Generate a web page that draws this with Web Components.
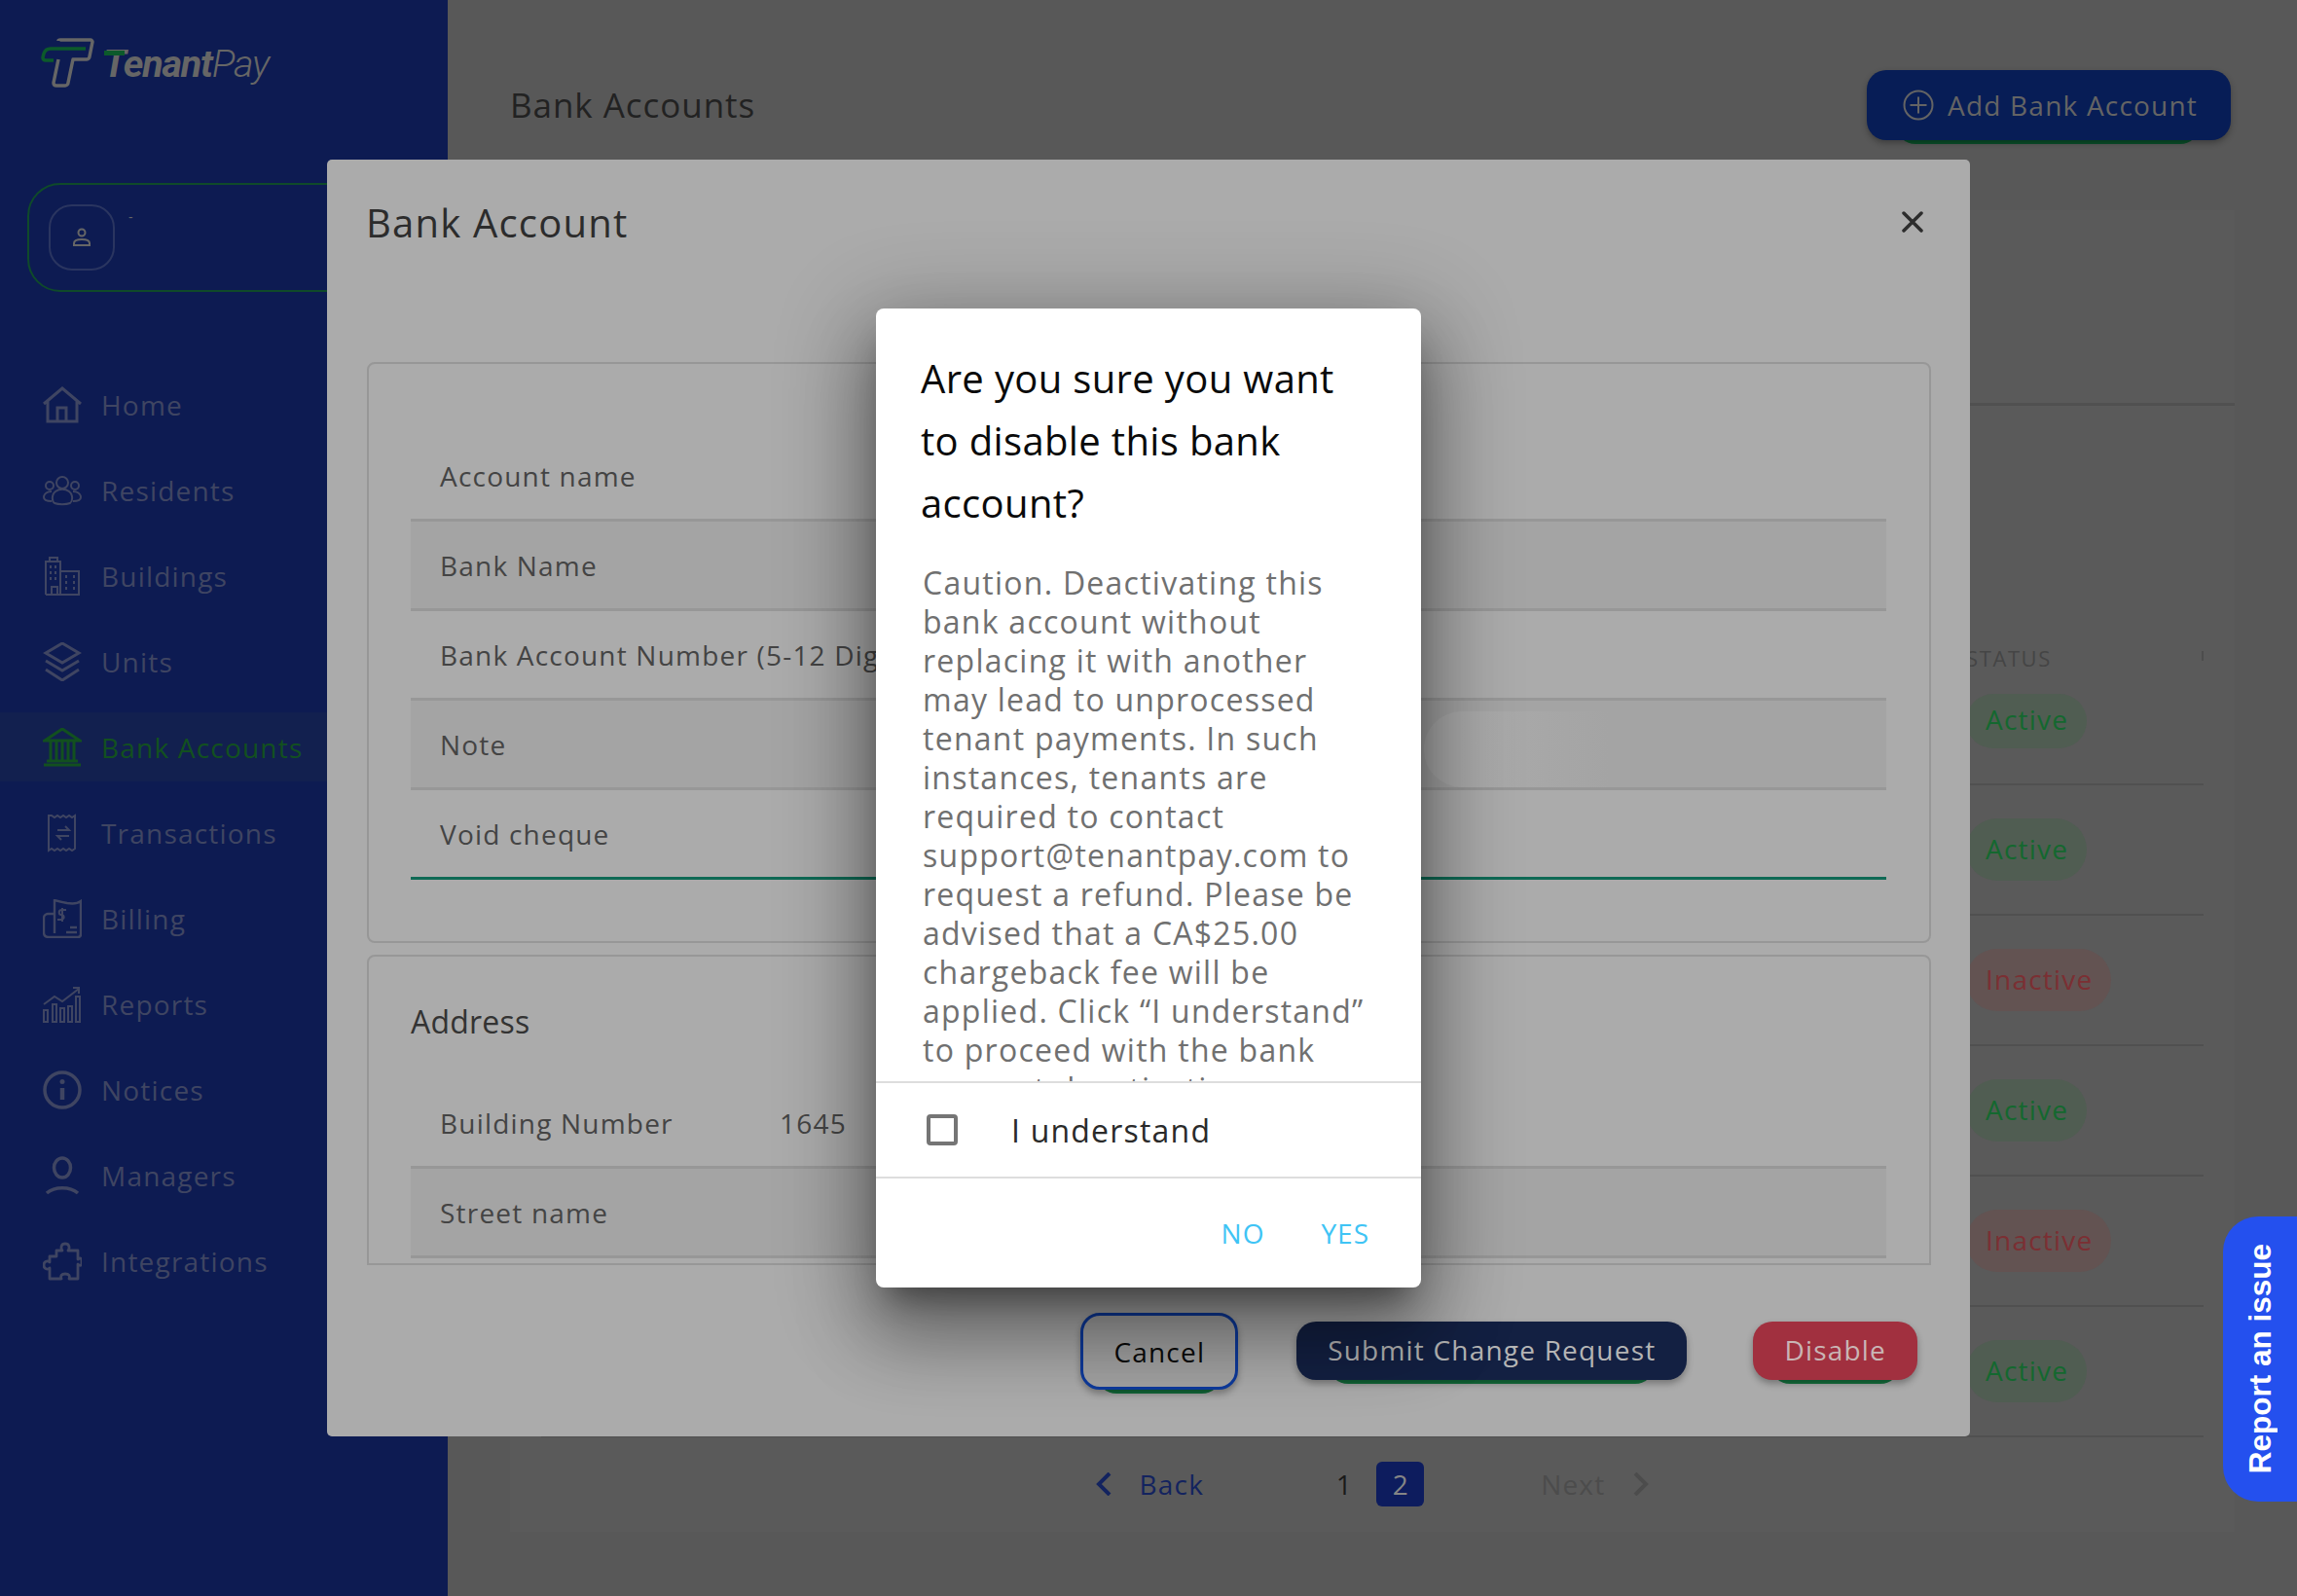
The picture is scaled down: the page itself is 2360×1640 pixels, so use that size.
<!DOCTYPE html>
<html lang="en">
<head>
<meta charset="utf-8">
<title>Bank Accounts</title>
<style>
  html, body { margin: 0; padding: 0; }
  body { width: 2360px; height: 1640px; overflow: hidden; background: #585858; font-family: "Open Sans", "Noto Sans", sans-serif; }
</style>
</head>
<body>
<tp-app>
  <tp-sidebar slot="side">
    <tp-nav label="Home"><svg slot="icon" width="40" height="40" viewBox="0 0 40 40" fill="none" stroke="currentColor" stroke-width="3"><path d="M1 19 20 3l19 16M5 16v21h30V16M15 37V23h9v14"/></svg></tp-nav>
    <tp-nav label="Residents"><svg slot="icon" width="40" height="40" viewBox="0 0 40 40" fill="none" stroke="currentColor" stroke-width="2"><circle cx="20" cy="12" r="6"/><circle cx="7" cy="15" r="4"/><circle cx="33" cy="15" r="4"/><path d="M12 33c-3-2-3-9 1-12 4-3 10-3 14 0 4 3 4 10 1 12-4 1.500-12 1.500-16 0ZM9 21c-4 0-8 2-8 6 0 3 3 4 8 4M31 21c4 0 8 2 8 6 0 3-3 4-8 4"/></svg></tp-nav>
    <tp-nav label="Buildings"><svg slot="icon" width="40" height="40" viewBox="0 0 40 40" fill="none" stroke="currentColor" stroke-width="2"><path d="M3 39V5h15v34M7 5V1h8v4M18 15h19v24H3"/><path d="M9 39v-8h6v8" /><path stroke-dasharray="3 3" d="M8 9v18M13 9v18M24 19v18M32 19v18"/></svg></tp-nav>
    <tp-nav label="Units"><svg slot="icon" width="40" height="40" viewBox="0 0 40 40" fill="none" stroke="currentColor" stroke-width="3"><path d="M20 1 37 11 20 21 3 11ZM3 19l17 10 17-10M3 28l17 11 17-11"/></svg></tp-nav>
    <tp-nav label="Bank Accounts" active><svg slot="icon" width="40" height="40" viewBox="0 0 40 40" fill="none" stroke="currentColor" stroke-width="3"><path d="M20 1 38 13H2ZM8 13v20M14 13v20M20 13v20M26 13v20M32 13v20M4 34h32M1 38h38"/></svg></tp-nav>
    <tp-nav label="Transactions"><svg slot="icon" width="40" height="40" viewBox="0 0 40 40" fill="none" stroke="currentColor" stroke-width="2"><path d="M6 2v36l3-2 3 2 3-2 3 2 3-2 3 2 3-2 3 2 3-2V2l-3 2-3-2-3 2-3-2-3 2-3-2-3 2-3-2Z"/><path d="M15 17h12l-4-4M27 23H15l4 4"/></svg></tp-nav>
    <tp-nav label="Billing"><svg slot="icon" width="40" height="40" viewBox="0 0 40 40" fill="none" stroke="currentColor" stroke-width="2.400"><path d="M11 15H5c-2 0-4 2-4 4v15c0 3 2 5 5 5h30c2 0 3-1 3-3V2c-4 3-8 3-14 2-5-1-9-2-13-3v34"/><path d="M20 9v14M24 11h-5c-3 0-3 5 0 5s4 4 0 5h-4" stroke-width="2"/><path d="M28 29h7M24 34h11"/></svg></tp-nav>
    <tp-nav label="Reports"><svg slot="icon" width="40" height="40" viewBox="0 0 40 40" fill="none" stroke="currentColor" stroke-width="2"><path d="M1 20 12 12l8 5L37 4M31 3h6v6"/><path d="M1 26h4v12H1zM10 20h4v18h-4zM18 24h4v14h-4zM26 22h4v16h-4zM34 12h4v26h-4z"/></svg></tp-nav>
    <tp-nav label="Notices"><svg slot="icon" width="40" height="40" viewBox="0 0 40 40" fill="none" stroke="currentColor" stroke-width="3.500"><circle cx="20" cy="20" r="18"/><path d="M20 18v12" stroke-width="4.500"/><circle cx="20" cy="11.500" r="2.500" fill="currentColor" stroke="none"/></svg></tp-nav>
    <tp-nav label="Managers"><svg slot="icon" width="40" height="40" viewBox="0 0 40 40" fill="none" stroke="currentColor" stroke-width="3.500"><ellipse cx="20" cy="12" rx="8.500" ry="10"/><path d="M4 38c8-7 24-7 32 0"/></svg></tp-nav>
    <tp-nav label="Integrations"><svg slot="icon" width="40" height="40" viewBox="0 0 40 40" fill="none" stroke="currentColor" stroke-width="2.800"><path d="M14 9h6c-2-3-1-7 3-7s5 4 3 7h10v9c3-2 4-1 4 3s-2 4-4 2v15H27c1-3 0-5-4-5s-5 2-4 5H7V27c-2 2-6 1-6-3s4-5 6-3V15l7 0Z" stroke-linejoin="round"/></svg></tp-nav>
  </tp-sidebar>

  <tp-page slot="main" heading="Bank Accounts">
    <tp-status>Active</tp-status>
    <tp-status>Active</tp-status>
    <tp-status tone="off">Inactive</tp-status>
    <tp-status>Active</tp-status>
    <tp-status tone="off">Inactive</tp-status>
    <tp-status>Active</tp-status>
  </tp-page>
</tp-app>

<tp-modal heading="Bank Account">
  <tp-fieldset slot="sets" size="first">
    <tp-row label="Account name"></tp-row>
    <tp-row label="Bank Name" shade></tp-row>
    <tp-row label="Bank Account Number (5-12 Digits)"></tp-row>
    <tp-row label="Note" shade pill></tp-row>
    <tp-row label="Void cheque" last></tp-row>
  </tp-fieldset>
  <tp-fieldset slot="sets" size="second" heading="Address">
    <tp-row label="Building Number" value="1645"></tp-row>
    <tp-row label="Street name" shade></tp-row>
  </tp-fieldset>
  <tp-button slot="actions" kind="outline">Cancel</tp-button>
  <tp-button slot="actions" kind="navy">Submit Change Request</tp-button>
  <tp-button slot="actions" kind="red">Disable</tp-button>
</tp-modal>

<tp-alert heading="Are you sure you want to disable this bank account?">Caution. Deactivating this bank account without replacing it with another may lead to unprocessed tenant payments. In such instances, tenants are required to contact support@tenantpay.com to request a refund. Please be advised that a CA$25.00 chargeback fee will be applied. Click “I understand” to proceed with the bank account deactivation.</tp-alert>

<tp-report>Report an issue</tp-report>

<script>
class TpApp extends HTMLElement {
  constructor() {
    super()
    this.attachShadow({ mode: 'open' })
    this.shadowRoot.innerHTML = `
      <style>
        :host { display: grid; grid-template-columns: 460px 1fr; width: 2360px; height: 1640px; }
      </style>
      <slot name="side"></slot>
      <slot name="main"></slot>
    `
  }
}

class TpSidebar extends HTMLElement {
  constructor() {
    super()
    this.attachShadow({ mode: 'open' })
    this.shadowRoot.innerHTML = `
      <style>
        :host { display: block; height: 1640px; background: #0d1b52; overflow: hidden; }
        .logo { display: flex; align-items: center; gap: 4px; height: 64px; padding: 33px 0 0 38px; }
        .word { font: italic 700 39.5px Roboto, sans-serif; letter-spacing: -1.2px; color: #666; position: relative; }
        .word b { font-weight: 300; }
        .word i { position: absolute; left: 1px; top: 10px; width: 21px; height: 5px; background: #0c5a2b; }
        .user { display: flex; gap: 14px; margin: 91px 0 0 28px; width: 440px; height: 108px; border: 2px solid #0f4a2a; border-radius: 34px; position: relative; }
        .user::after { content: ""; position: absolute; right: 107px; bottom: 28px; border-left: 3px solid transparent; border-bottom: 4px solid #555; }
        .avatar { width: 64px; height: 64px; margin: 20px 0 0 20px; border: 2px solid #2a3560; border-radius: 24px; display: flex; align-items: center; justify-content: center; color: #666; }
        .dash { font-size: 14px; line-height: 14px; color: #666; margin-top: 26px; }
        nav { margin-top: 72px; display: flex; flex-direction: column; }
      </style>
      <div class="logo">
        <svg width="64" height="56" viewBox="0 0 64 56" fill="none" stroke-width="3.500" stroke-linejoin="round">
          <path stroke="#666" d="M22 5c0-1 1-1 2-1h31c1 0 2 1 2 2l-3 15c0 1-1 3-3 3H37l-5 24c0 2-2 3-3 3H20c-2 0-3-1-3-3l5-24" />
          <path stroke="#0c5a2b" d="M50 13H14c-4 0-6 2-7 5l-1 4c0 2 1 3 3 3h8" />
        </svg>
        <span class="word"><i></i>Tenant<b>Pay</b></span>
      </div>
      <div class="user">
        <div class="avatar">
          <svg width="20" height="20" viewBox="0 0 20 20" fill="none" stroke="currentColor" stroke-width="2"><circle cx="10" cy="5" r="3.500"/><path d="M2 18v-2c0-3 4-4 8-4s8 1 8 4v2Z"/></svg>
        </div>
        <span class="dash">-</span>
      </div>
      <nav><slot></slot></nav>
    `
  }
}

class TpNav extends HTMLElement {
  constructor() {
    super()
    this.attachShadow({ mode: 'open' })
    this.shadowRoot.innerHTML = `
      <style>
        :host { display: flex; align-items: center; gap: 20px; height: 88px; padding-left: 44px; color: #3f4562; font-size: 28px; letter-spacing: 1.2px; }
        :host([active]) { color: #12501f; background: linear-gradient(#0d1b52 8px, #12204f 8px, #12204f 79px, #0d1b52 79px); }
        ::slotted(svg) { flex: none; }
      </style>
      <slot name="icon"></slot>
      <span id="label"></span>
    `
  }

  connectedCallback() {
    this.shadowRoot.querySelector('#label').textContent = this.getAttribute('label')
  }
}

class TpPage extends HTMLElement {
  constructor() {
    super()
    this.attachShadow({ mode: 'open' })
    this.shadowRoot.innerHTML = `
      <style>
        :host { display: block; padding: 72px 64px 0; color: #222; }
        header { display: flex; justify-content: space-between; align-items: center; height: 72px; margin-bottom: 72px; padding-right: 4px; }
        h1 { margin: 0 0 1px; font-size: 35px; font-weight: 400; letter-spacing: .95px; color: #222; }
        .add { position: relative; display: flex; align-items: center; gap: 14px; height: 72px; padding: 0 34px 0 37px; background: #071d56; border-radius: 20px; color: #646464; font-size: 28px; letter-spacing: 1.2px; box-shadow: 0 3px 6px rgba(0,0,0,.3); }
        .add::before { content: ""; position: absolute; z-index: -1; left: 30px; right: 32px; bottom: -4px; height: 20px; border-radius: 0 0 20px 20px; background: #0a4f2a; }
        .card { height: 1358px; background: #5a5a5a; box-sizing: border-box; }
        .top { height: 201px; border-bottom: 3px solid #505050; box-sizing: border-box; }
        .table { margin: 243px 32px 0; }
        .head { display: grid; grid-template-columns: 1fr 244px; height: 32px; align-items: center; font-size: 22px; letter-spacing: 1.6px; color: #454545; }
        .head span { position: relative; }
        .head span::after { content: ""; position: absolute; right: 0; top: 8px; width: 2px; height: 10px; background: #4d4d4d; }
        ::slotted(tp-status) { border-bottom: 2px solid #505050; }
        .pager { display: flex; justify-content: center; align-items: center; gap: 120px; height: 95px; font-size: 28px; letter-spacing: 1.2px; }
        .back, .next { display: flex; align-items: center; gap: 29px; }
        .back { color: #13235f; }
        .next { color: #4c4c4c; }
        .pages { display: flex; gap: 9px; margin-left: -1px; color: #1a1a1a; }
        .pages span { width: 49px; height: 46px; display: flex; align-items: center; justify-content: center; border-radius: 6px; letter-spacing: 0; }
        .pages .on { background: #0d1c5e; color: #858585; }
      </style>
      <header>
        <h1></h1>
        <div class="add">
          <svg width="32" height="32" viewBox="0 0 32 32" fill="none" stroke="currentColor" stroke-width="2"><circle cx="16" cy="16" r="14.500"/><path d="M16 7.500v17M7.500 16h17"/></svg>
          Add Bank Account
        </div>
      </header>
      <section class="card">
        <div class="top"></div>
        <div class="table">
          <div class="head"><i></i><span>STATUS</span></div>
          <slot></slot>
        </div>
        <div class="pager">
          <div class="back"><svg width="16" height="24" viewBox="0 0 16 24" fill="none" stroke="currentColor" stroke-width="4"><path d="M14 1 3 12l11 11"/></svg>Back</div>
          <div class="pages"><span>1</span><span class="on">2</span></div>
          <div class="next">Next<svg width="16" height="24" viewBox="0 0 16 24" fill="none" stroke="currentColor" stroke-width="4"><path d="m2 1 11 11L2 23"/></svg></div>
        </div>
      </section>
    `
  }

  connectedCallback() {
    this.shadowRoot.querySelector('h1').textContent = this.getAttribute('heading')
  }
}

class TpStatus extends HTMLElement {
  constructor() {
    super()
    this.attachShadow({ mode: 'open' })
    this.shadowRoot.innerHTML = `
      <style>
        :host { display: flex; align-items: center; height: 134px; box-sizing: border-box; padding-left: calc(100% - 244px); --fg: #14682f; --bg: #505d52; }
        :host(:first-of-type) { height: 115px; padding-bottom: 16px; }
        :host([tone="off"]) { --fg: #7b2f33; --bg: #635352; }
        span { display: block; height: 64px; line-height: 62px; padding: 0 19px 0 20px; border-radius: 32px; font-size: 28px; letter-spacing: 1.2px; color: var(--fg); background: var(--bg); }
        :host(:first-of-type) span { height: 56px; line-height: 52px; }
      </style>
      <span><slot></slot></span>
    `
  }
}

class TpModal extends HTMLElement {
  constructor() {
    super()
    this.attachShadow({ mode: 'open' })
    this.shadowRoot.innerHTML = `
      <style>
        :host { position: absolute; left: 336px; top: 164px; width: 1688px; height: 1312px; box-sizing: border-box; padding: 0 40px 0 41px; background: #ababab; border-radius: 5px; display: flex; flex-direction: column; color: #2c2c2c; }
        header { display: flex; justify-content: space-between; align-items: center; height: 128px; margin-bottom: 80px; padding-right: 8px; }
        h2 { margin: 0 0 0 -1px; font-size: 40px; font-weight: 400; letter-spacing: 1.2px; color: #2c2c2c; }
        .sets { display: flex; flex-direction: column; gap: 12px; }
        footer { display: flex; justify-content: flex-end; align-items: center; gap: 60px; height: 176px; padding-right: 14px; }
      </style>
      <header>
        <h2></h2>
        <svg width="22" height="22" viewBox="0 0 22 22" fill="none" stroke="#2c2c2c" stroke-width="3.500" stroke-linecap="round"><path d="M2 2l18 18M20 2 2 20"/></svg>
      </header>
      <div class="sets"><slot name="sets"></slot></div>
      <footer><slot name="actions"></slot></footer>
    `
  }

  connectedCallback() {
    this.shadowRoot.querySelector('h2').textContent = this.getAttribute('heading')
  }
}

class TpFieldset extends HTMLElement {
  constructor() {
    super()
    this.attachShadow({ mode: 'open' })
    this.shadowRoot.innerHTML = `
      <style>
        :host { display: block; box-sizing: border-box; border: 2px solid #979797; border-radius: 8px; padding: 0 44px 0 43px; overflow: hidden; }
        :host([size="first"]) { height: 597px; padding-top: 70px; }
        :host([size="second"]) { height: 319px; border-radius: 8px 8px 0 0; }
        h3 { margin: 0; padding: 22px 0 14px; line-height: 90px; font-size: 32px; font-weight: 400; letter-spacing: .2px; color: #333; }
        h3:empty { display: none; }
      </style>
      <h3></h3>
      <slot></slot>
    `
  }

  connectedCallback() {
    this.shadowRoot.querySelector('h3').textContent = this.getAttribute('heading') || ''
  }
}

class TpRow extends HTMLElement {
  constructor() {
    super()
    this.attachShadow({ mode: 'open' })
    this.shadowRoot.innerHTML = `
      <style>
        :host { display: flex; align-items: center; height: 92px; box-sizing: border-box; padding-left: 30px; border-bottom: 3px solid #979797; font-size: 28px; letter-spacing: 1.2px; color: #444; white-space: nowrap; position: relative; overflow: hidden; }
        :host([shade]) { background: #a4a4a4; }
        :host([last]) { border-bottom-color: #0f6a55; }
        #label { width: 349px; flex: none; }
        .pill { position: absolute; left: 1041px; top: 11px; width: 190px; height: 78px; border-radius: 40px 0 0 40px; background: linear-gradient(90deg, #ababab 20%, #a4a4a4); display: none; }
        :host([pill]) .pill { display: block; }
      </style>
      <span id="label"></span><span id="value"></span><i class="pill"></i>
    `
  }

  connectedCallback() {
    this.shadowRoot.querySelector('#label').textContent = this.getAttribute('label')
    this.shadowRoot.querySelector('#value').textContent = this.getAttribute('value') || ''
  }
}

class TpButton extends HTMLElement {
  constructor() {
    super()
    this.attachShadow({ mode: 'open' })
    this.shadowRoot.innerHTML = `
      <style>
        :host { display: block; position: relative; z-index: 0; font-size: 28px; letter-spacing: 1.2px; --inset: 33px; }
        :host([kind="red"]) { margin-left: 8px; --inset: 18px; }
        :host([kind="outline"]) { --inset: 17px; }
        div { position: relative; height: 60px; line-height: 59px; padding: 0 32px; border-radius: 20px; box-shadow: 0 4px 7px rgba(0,0,0,.3); white-space: nowrap; }
        :host::before { content: ""; position: absolute; z-index: -1; left: var(--inset); right: var(--inset); bottom: -4px; height: 20px; border-radius: 0 0 20px 20px; background: #15733f; }
        :host([kind="navy"]) div { background: #132042; color: #b5b5b5; }
        :host([kind="red"]) div { background: #a1303f; color: #c9b5b5; }
        :host([kind="outline"]) div { height: 79px; line-height: 74px; box-sizing: border-box; padding: 0 31px; background: #a3a3a3; border: 3px solid #0e3a9c; color: #0a0a0a; }
      </style>
      <div><slot></slot></div>
    `
  }
}

class TpAlert extends HTMLElement {
  constructor() {
    super()
    this.attachShadow({ mode: 'open' })
    this.shadowRoot.innerHTML = `
      <style>
        :host { position: absolute; left: 900px; top: 317px; width: 560px; height: 1006px; display: flex; flex-direction: column; background: #fff; border-radius: 8px; box-shadow: 0 22px 30px -14px rgba(0,0,0,.4), 0 48px 76px 6px rgba(0,0,0,.28), 0 18px 92px 16px rgba(0,0,0,.24); }
        h2 { margin: 0; padding: 40px 46px 0; font-size: 40px; line-height: 64px; font-weight: 500; color: #0a0a0a; letter-spacing: .35px; }
        .body { flex: 1; min-height: 0; overflow: hidden; margin-top: 30px; padding: 0 50px 0 48px; font-size: 32px; line-height: 40px; letter-spacing: 1.25px; color: #707070; }
        .check { display: flex; align-items: center; height: 96px; border-top: 2px solid #ddd; border-bottom: 2px solid #ddd; padding-left: 52px; gap: 55px; font-size: 32px; letter-spacing: 1.2px; color: #2a2a2a; }
        .box { width: 24px; height: 24px; border: 4px solid #757575; border-radius: 4px; }
        footer { display: flex; justify-content: flex-end; gap: 58px; align-items: center; height: 112px; padding: 0 53px 0 0; font-size: 28px; letter-spacing: 1px; color: #3fc4f5; }
      </style>
      <h2></h2>
      <div class="body"><slot></slot></div>
      <div class="check"><span class="box"></span><span>I understand</span></div>
      <footer><span>NO</span><span>YES</span></footer>
    `
  }

  connectedCallback() {
    this.shadowRoot.querySelector('h2').textContent = this.getAttribute('heading')
  }
}

class TpReport extends HTMLElement {
  constructor() {
    super()
    this.attachShadow({ mode: 'open' })
    this.shadowRoot.innerHTML = `
      <style>
        :host { position: absolute; right: 0; top: 1250px; width: 76px; height: 293px; background: #2450ee; border-radius: 36px 0 0 36px; display: flex; align-items: center; justify-content: center; color: #fff; font: 700 31.5px "Liberation Sans", Arial, sans-serif; }
        span { writing-mode: vertical-rl; transform: rotate(180deg); white-space: nowrap; }
      </style>
      <span><slot></slot></span>
    `
  }
}

customElements.define('tp-app', TpApp)
customElements.define('tp-sidebar', TpSidebar)
customElements.define('tp-nav', TpNav)
customElements.define('tp-page', TpPage)
customElements.define('tp-status', TpStatus)
customElements.define('tp-modal', TpModal)
customElements.define('tp-fieldset', TpFieldset)
customElements.define('tp-row', TpRow)
customElements.define('tp-button', TpButton)
customElements.define('tp-alert', TpAlert)
customElements.define('tp-report', TpReport)
</script>
</body>
</html>
